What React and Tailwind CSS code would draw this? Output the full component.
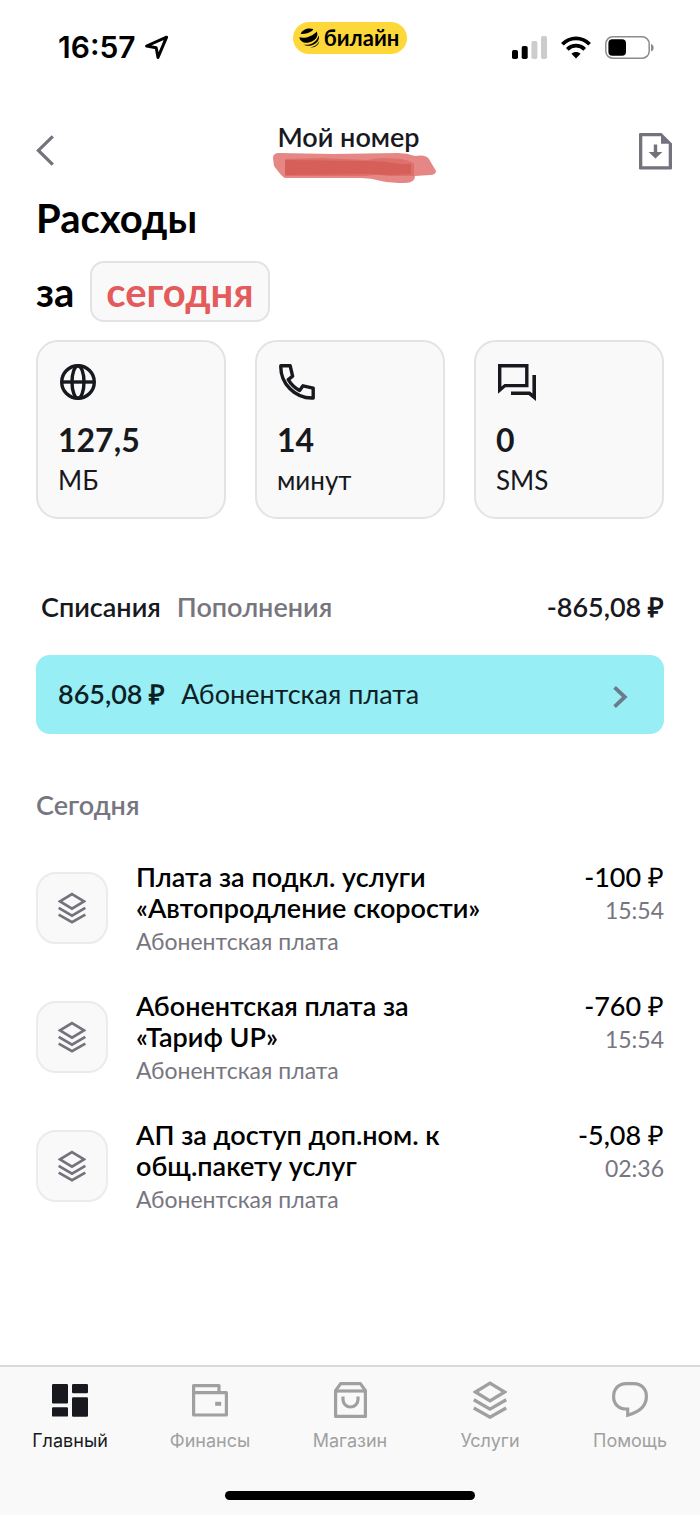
/**
 * Expenses screen
 * Daily usage summary, list of charges and the bottom navigation
 */

const USAGE = [
  { id: 'data', value: '127,5', unit: 'МБ', Icon: GlobeIcon },
  { id: 'calls', value: '14', unit: 'минут', Icon: PhoneIcon },
  { id: 'sms', value: '0', unit: 'SMS', Icon: ChatIcon },
];

const CHARGES = [
  {
    id: 1,
    lines: ['Плата за подкл. услуги', '«Автопродление скорости»'],
    category: 'Абонентская плата',
    amount: '-100 ₽',
    time: '15:54',
  },
  {
    id: 2,
    lines: ['Абонентская плата за', '«Тариф UP»'],
    category: 'Абонентская плата',
    amount: '-760 ₽',
    time: '15:54',
  },
  {
    id: 3,
    lines: ['АП за доступ доп.ном. к', 'общ.пакету услуг'],
    category: 'Абонентская плата',
    amount: '-5,08 ₽',
    time: '02:36',
  },
];

const NAV = [
  { id: 'home', label: 'Главный', Icon: DashboardIcon, active: true },
  { id: 'finance', label: 'Финансы', Icon: WalletIcon },
  { id: 'shop', label: 'Магазин', Icon: BagIcon },
  { id: 'services', label: 'Услуги', Icon: LayersIcon },
  { id: 'help', label: 'Помощь', Icon: HelpIcon },
];

function GlobeIcon() {
  return (
    <svg width="36" height="36" viewBox="0 0 36 36" fill="none" stroke="currentColor" strokeWidth="3.4">
      <circle cx="18" cy="18" r="16.3" />
      <ellipse cx="18" cy="18" rx="6" ry="16.3" />
      <path d="M2 18H34" />
    </svg>
  );
}

function PhoneIcon() {
  return (
    <svg width="36" height="36" viewBox="0 0 36 36" fill="none" stroke="currentColor" strokeWidth="3.4" strokeLinejoin="round">
      <path d="M1.8 1.8H11.2L13.6 12.2L9.3 15.6C12 20.2 15.8 24 20.6 26.4L24 21.8L34.2 24.2V34C16 34.8 1.2 19.4 1.8 1.8Z" />
    </svg>
  );
}

function ChatIcon() {
  return (
    <svg width="38" height="37" viewBox="0 0 38 37" fill="currentColor">
      <path fillRule="evenodd" d="M0 0H30.5V23.3H7.5L0 29.8ZM3.4 3.4V22.4L6.4 19.9H27.1V3.4Z" />
      <path d="M34.4 11H38V37L30.6 31H13V27.4H32L34.4 29.4Z" />
    </svg>
  );
}

function LayersIcon({ className = 'h-[38px] w-[34px]' }) {
  return (
    <svg className={className} viewBox="0 0 34 38" fill="none" stroke="currentColor" strokeWidth="3.3">
      <path d="M17 2.2L31.6 11L17 19.8L2.4 11Z" />
      <path d="M.8 18.8L17 28.2L33.2 18.8" />
      <path d="M.8 27L17 36.2L33.2 27" />
    </svg>
  );
}

function DashboardIcon() {
  return (
    <svg width="36" height="33" viewBox="0 0 36 33" fill="currentColor">
      <rect width="16" height="19.5" rx="1.2" />
      <rect x="20" width="16" height="9.3" rx="1.2" />
      <rect y="23.3" width="16" height="9.3" rx="1.2" />
      <rect x="20" y="13.2" width="16" height="19.5" rx="1.2" />
    </svg>
  );
}

function WalletIcon() {
  return (
    <svg width="36" height="33" viewBox="0 0 36 33" fill="none" stroke="currentColor" strokeWidth="3.2" strokeLinejoin="round">
      <path d="M1.6 8.6H34.4V31H1.6ZM1.6 8.6V1.6H27V8.6" />
      <path d="M23.2 19.8H29.2" strokeWidth="4" />
    </svg>
  );
}

function BagIcon() {
  return (
    <svg width="33" height="36" viewBox="0 0 33 36" fill="none" stroke="currentColor" strokeWidth="3.2" strokeLinejoin="round">
      <path d="M1.6 8.6L6.6 1.6H26.4L31.4 8.6V34.4H1.6Z" />
      <path d="M1.6 9H31.4" />
      <path d="M9 14.5V17.5A7.5 7.5 0 0 0 24 17.5V14.5" />
    </svg>
  );
}

function HelpIcon() {
  return (
    <svg width="36" height="36" viewBox="0 0 36 36" fill="none" stroke="currentColor" strokeWidth="3.2">
      <path d="M15.7 27H14.5C6.5 27 1.6 22 1.6 14.5C1.6 7 6.8 1.6 14.2 1.6H21.8C29.2 1.6 34.4 7 34.4 14.5C34.4 24 27.5 30 15.7 33.2Z" />
    </svg>
  );
}

function OperatorBadge() {
  return (
    <div className="flex h-8 items-center gap-1 rounded-full bg-[#fed838] pr-2 pl-1.5 text-[22px] leading-8 font-bold text-black">
      <svg width="21" height="20" viewBox="0 0 21 20" aria-hidden="true">
        <path d="M1.6 5.8C3.4 1.6 9 -.6 14.2 1C14.4 3.4 6 7 1.6 5.8Z" />
        <path d="M.4 9.3C6 10.8 13.8 8.2 17.6 3.4C20.4 8 15.6 13.4 9.6 14.6C5 15.5 1 13.6 .4 9.3Z" />
        <path d="M4.6 16.6C11.4 17.8 18 13.6 19.6 7.4C21.2 12 17.4 16 13 17.3C9.8 18.2 6.6 18 4.6 16.6Z" />
        <path d="M11.6 19.4C15.6 18.8 18.8 16.4 20.2 13C20 16.6 16 20 11.6 19.4Z" />
      </svg>
      билайн
    </div>
  );
}

function StatusBar() {
  return (
    <div className="grid h-[94px] grid-cols-3 items-center px-[46px]">
      <div className="flex items-center gap-2 pl-3 font-['Inter',sans-serif] text-[30px] font-semibold text-black">
        16:57
        <svg width="25" height="25" viewBox="0 0 25 25" fill="none" stroke="currentColor" strokeWidth="3" strokeLinejoin="round">
          <path d="M22.6 2.2L14 22.4L12.2 12.8L2.6 11Z" />
        </svg>
      </div>
      <div className="flex justify-center pb-[18px]">
        <OperatorBadge />
      </div>
      <div className="flex items-center justify-end gap-3.5 text-black">
        <svg width="35" height="23" viewBox="0 0 35 23" fill="currentColor">
          <rect y="14" width="6" height="9" rx="1.8" />
          <rect x="9.7" y="10" width="6" height="13" rx="1.8" />
          <rect x="19.4" y="5" width="6" height="18" rx="1.8" fill="#cccccc" />
          <rect x="29" width="6" height="23" rx="1.8" fill="#cccccc" />
        </svg>
        <svg width="30" height="23" viewBox="0 0 30 23" fill="none" stroke="currentColor" strokeWidth="3.8">
          <path d="M1.4 8.3C9 .4 21 .4 28.6 8.3" />
          <path d="M6.3 13.3C11.3 8.4 18.7 8.4 23.7 13.3" />
          <path d="M10.4 17.8C13 15.4 17 15.4 19.6 17.8L15 22.4Z" fill="currentColor" stroke="none" />
        </svg>
        <svg width="49" height="23" viewBox="0 0 49 23">
          <rect x=".8" y=".8" width="43.4" height="21.4" rx="7" fill="none" stroke="#8c8c8c" strokeWidth="1.5" />
          <rect x="3.4" y="3.2" width="17.6" height="16.6" rx="4" fill="currentColor" />
          <path d="M46 8V15.6C49.6 14.6 49.6 9 46 8Z" fill="#8c8c8c" />
        </svg>
      </div>
    </div>
  );
}

function Header() {
  return (
    <header className="flex items-start justify-between pr-7 pl-9">
      <button type="button" aria-label="Назад" className="mt-[41px] text-[#73727d]">
        <svg width="18" height="31" viewBox="0 0 18 31" fill="none" stroke="currentColor" strokeWidth="3.2">
          <path d="M16.8 1.4L2.4 15.4L16.8 29.6" />
        </svg>
      </button>
      <div className="mt-7 flex flex-col items-center pl-1">
        <h2 className="text-[27px] leading-[30px] font-semibold text-[#18191e]">Мой номер</h2>
        {/* number hidden under a marker stroke */}
        <svg width="164" height="32" viewBox="0 0 164 32" className="ml-3" aria-hidden="true">
          <path d="M0 6Q0 1 6 1L60 2L125 1Q134 1 142 4Q153 2 156 7L163 19Q163 23 157 23L142 24Q142 31 132 31Q118 31 108 29Q98 26 88 26L12 26Q9 25 1 14Z" fill="#e58885" />
          <path d="M12 7L50 6L95 8Q102 6 112 6Q134 6 141 12V24Q128 24 116 24Q104 22 92 24L12 24Z" fill="#de706b" />
          <path d="M12 8L95 9Q112 9 128 12L138 12V22L116 23L92 22L12 23Z" fill="#d75f59" />
        </svg>
      </div>
      <button type="button" aria-label="Скачать отчёт" className="mt-[39px] text-[#73727d]">
        <svg width="33" height="37" viewBox="0 0 33 37" fill="currentColor">
          <path fillRule="evenodd" d="M1.2 0H22.5L33 10.5V35.5Q33 36.6 31.8 36.6H1.2Q0 36.6 0 35.5V1.2Q0 0 1.2 0ZM3.3 3.3V33.3H29.7V10.8H22V3.3Z" />
          <path d="M14.8 11.4H18.2V19H23.4L16.5 25.4L9.6 19H14.8Z" />
        </svg>
      </button>
    </header>
  );
}

function UsageCard({ value, unit, Icon }) {
  return (
    <li className="flex h-[179px] flex-col items-start rounded-[22px] border-2 border-[#e3e3e6] bg-[#f9f9f9] px-5 pt-[22px] text-[#18191e]">
      <div className="flex h-10 items-start pl-0.5">
        <Icon />
      </div>
      <p className="mt-4 text-[32px] leading-10 font-bold">{value}</p>
      <p className="text-[26px] leading-10">{unit}</p>
    </li>
  );
}

function ChargeRow({ lines, category, amount, time }) {
  return (
    <li className="flex items-start gap-7">
      <div className="mt-[11px] flex size-[72px] shrink-0 items-center justify-center rounded-[20px] border-2 border-[#ebebed] bg-[#f9f9f9] text-[#73727d]">
        <LayersIcon className="h-8 w-7" />
      </div>
      <div className="flex-1">
        <h3 className="text-[27px] leading-[31px] font-semibold text-black">
          {lines.map((line) => (
            <span key={line} className="block">{line}</span>
          ))}
        </h3>
        <p className="text-[23px] leading-9 text-[#77767f]">{category}</p>
      </div>
      <div className="text-right">
        <p className="text-[27px] leading-[31px] font-medium text-black">{amount}</p>
        <p className="text-[23px] leading-9 text-[#77767f]">{time}</p>
      </div>
    </li>
  );
}

function BottomNav() {
  return (
    <nav className="border-t-2 border-[#dadada] bg-[#f9f9f9] font-['Inter',sans-serif]">
      <div className="grid grid-cols-5">
        {NAV.map(({ id, label, Icon, active }) => (
          <a
            key={id}
            href={`#${id}`}
            aria-current={active ? 'page' : undefined}
            className={`flex flex-col items-center pt-3.5 text-lg leading-6 ${active ? 'text-[#18191e]' : 'text-[#a0a0a0]'}`}
          >
            <span className="flex h-[38px] items-center">
              <Icon />
            </span>
            <span className="mt-2.5">{label}</span>
          </a>
        ))}
      </div>
      <div className="mx-auto mt-[38px] mb-[15px] h-[9px] w-[250px] rounded-full bg-black" />
    </nav>
  );
}

export default function App() {
  return (
    <div className="flex min-h-screen flex-col bg-white font-['Lato',sans-serif]">
      <StatusBar />
      <Header />

      <main className="flex-1 px-9">
        <h1 className="mt-2.5 text-[40px] leading-[48px] font-bold text-black">Расходы</h1>
        <div className="mt-[19px] flex items-center gap-4 text-[40px] leading-[48px] font-bold text-black">
          за
          <button type="button" className="h-[61px] rounded-[14px] border-2 border-[#e3e3e6] bg-[#f9f9f9] px-3.5 text-[#e35b5b]">
            сегодня
          </button>
        </div>

        <ul className="mt-[18px] grid grid-cols-3 gap-[29px]">
          {USAGE.map((item) => (
            <UsageCard key={item.id} {...item} />
          ))}
        </ul>

        <div className="mt-[68px] flex items-center justify-between text-[27px] leading-10 font-semibold text-[#18191e]">
          <div className="flex gap-4 pl-[5px]">
            <button type="button">Списания</button>
            <button type="button" className="text-[#77767f]">Пополнения</button>
          </div>
          <p>-865,08 ₽</p>
        </div>

        <button type="button" className="mt-7 flex h-[79px] w-full items-center gap-4 rounded-[14px] bg-[#97eef4] pr-9 pl-[22px] text-[27px] text-[#0d1f26]">
          <span className="font-semibold">865,08 ₽</span>
          <span className="flex-1 text-left">Абонентская плата</span>
          <svg width="15" height="22" viewBox="0 0 15 22" className="mt-1" fill="none" stroke="#6d7a8c" strokeWidth="3.8">
            <path d="M1.6 1.4L11.8 11L1.6 20.6" />
          </svg>
        </button>

        <h2 className="mt-[51px] text-[27px] leading-10 font-semibold text-[#77767f]">Сегодня</h2>

        <ul className="mt-9 flex flex-col gap-[31px]">
          {CHARGES.map((item) => (
            <ChargeRow key={item.id} {...item} />
          ))}
        </ul>
      </main>

      <BottomNav />
    </div>
  );
}
